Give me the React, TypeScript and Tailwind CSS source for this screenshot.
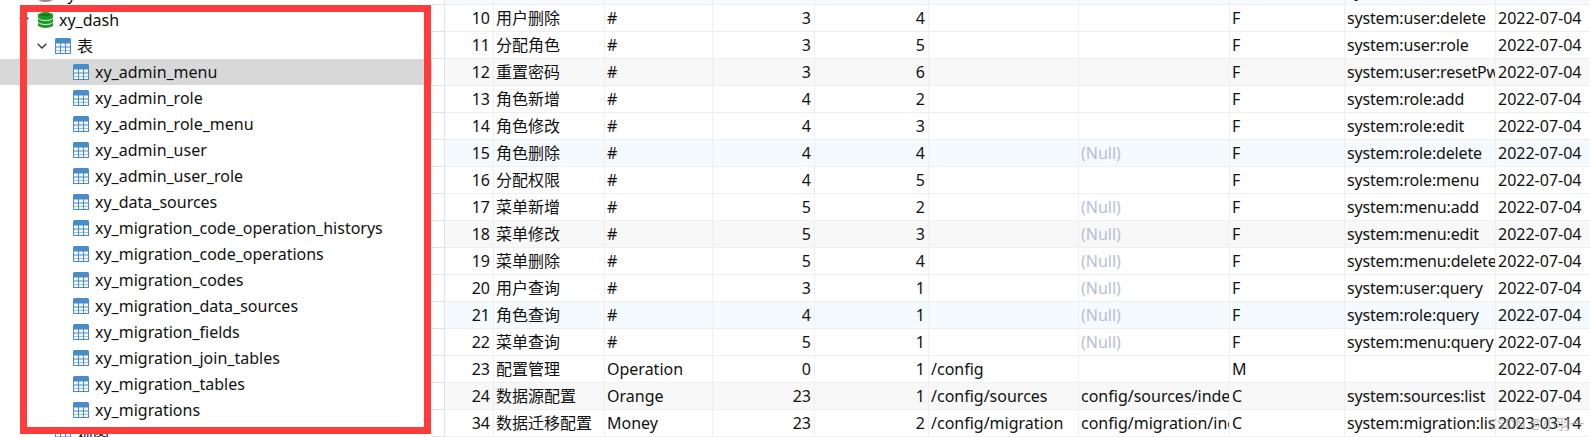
const FONT = "font-['Noto_Sans','Noto_Sans_CJK_SC',sans-serif]";

function TableIcon() {
  return (
    <svg width="16" height="16" viewBox="0 0 16 16" className="shrink-0">
      <path d="M1.5 0h13A1.5 1.5 0 0 1 16 1.5V16H0V1.5A1.5 1.5 0 0 1 1.5 0z" fill="#4a8cc8" />
      {[5.5, 9.5, 13].map((y, i) =>
        [1, 6, 11].map((x) => (
          <rect key={`${x}-${y}`} x={x} y={y} width="4" height={i === 2 ? 2 : 3} fill="#f4f8fc" />
        )),
      )}
    </svg>
  );
}

function DbIcon({ color, dark }: { color: string; dark: string }) {
  return (
    <svg width="15" height="16" viewBox="0 0 15 16" className="shrink-0">
      <rect x="0" y="2" width="15" height="12" fill={color} />
      <ellipse cx="7.5" cy="13" rx="7.5" ry="3" fill={color} />
      <ellipse cx="7.5" cy="3" rx="7.5" ry="3" fill={color} />
      <path d="M0 6.2c1.5 1.7 4 2.3 7.5 2.3S13.500 7.900 15 6.200" fill="none" stroke="#d8efd8" strokeWidth="1" />
      <path d="M0 10.200c1.500 1.700 4 2.300 7.500 2.300s6-.6 7.500-2.300" fill="none" stroke="#d8efd8" strokeWidth="1" />
      <ellipse cx="7.500" cy="3" rx="5" ry="1.300" fill={dark} />
    </svg>
  );
}

function Chevron() {
  return (
    <svg width="10" height="6" viewBox="0 0 10 6" className="shrink-0">
      <path d="M.7.700 5 5l4.300-4.300" fill="none" stroke="#333" strokeWidth="1.300" />
    </svg>
  );
}

const TABLES = [
  "xy_admin_menu",
  "xy_admin_role",
  "xy_admin_role_menu",
  "xy_admin_user",
  "xy_admin_user_role",
  "xy_data_sources",
  "xy_migration_code_operation_historys",
  "xy_migration_code_operations",
  "xy_migration_codes",
  "xy_migration_data_sources",
  "xy_migration_fields",
  "xy_migration_join_tables",
  "xy_migration_tables",
  "xy_migrations",
];

function Tree() {
  return (
    <div className="w-[432px] shrink-0 -mt-[19px] bg-white text-[16px] text-[#111111]">
      <div className="flex h-[26px] items-center pl-[38px] gap-[6px]">
        <DbIcon color="#8f8f8f" dark="#6f6f6f" />
        <span>xy</span>
      </div>
      <div className="flex h-[26px] items-center pl-[19px]">
        <Chevron />
        <span className="ml-[9px]">
          <DbIcon color="#1f9a2b" dark="#0f7a1b" />
        </span>
        <span className="ml-[6px]">xy_dash</span>
      </div>
      <div className="flex h-[26px] items-center pl-[37px]">
        <Chevron />
        <span className="ml-[8px]">
          <TableIcon />
        </span>
        <span className="ml-[6px]">表</span>
      </div>
      {TABLES.map((t, i) => (
        <div
          key={t}
          className={`flex h-[26px] items-center pl-[73px] gap-[6px] ${i === 0 ? "bg-[#d8d8d8]" : ""}`}
        >
          <TableIcon />
          <span>{t}</span>
        </div>
      ))}
      <div className="flex h-[26px] items-center pl-[55px] gap-[6px]">
        <TableIcon />
        <span>视图</span>
      </div>
    </div>
  );
}

type Row = [string, string, string, string, string, string, string, string, string, string];

const D = "2022-07-04";
const ROWS: Row[] = [
  ["9", "用户修改", "#", "3", "3", "", "", "F", "system:user:edit", D],
  ["10", "用户删除", "#", "3", "4", "", "", "F", "system:user:delete", D],
  ["11", "分配角色", "#", "3", "5", "", "", "F", "system:user:role", D],
  ["12", "重置密码", "#", "3", "6", "", "", "F", "system:user:resetPwd", D],
  ["13", "角色新增", "#", "4", "2", "", "", "F", "system:role:add", D],
  ["14", "角色修改", "#", "4", "3", "", "", "F", "system:role:edit", D],
  ["15", "角色删除", "#", "4", "4", "", "(Null)", "F", "system:role:delete", D],
  ["16", "分配权限", "#", "4", "5", "", "", "F", "system:role:menu", D],
  ["17", "菜单新增", "#", "5", "2", "", "(Null)", "F", "system:menu:add", D],
  ["18", "菜单修改", "#", "5", "3", "", "(Null)", "F", "system:menu:edit", D],
  ["19", "菜单删除", "#", "5", "4", "", "(Null)", "F", "system:menu:delete", D],
  ["20", "用户查询", "#", "3", "1", "", "(Null)", "F", "system:user:query", D],
  ["21", "角色查询", "#", "4", "1", "", "(Null)", "F", "system:role:query", D],
  ["22", "菜单查询", "#", "5", "1", "", "(Null)", "F", "system:menu:query", D],
  ["23", "配置管理", "Operation", "0", "1", "/config", "", "M", "", D],
  ["24", "数据源配置", "Orange", "23", "1", "/config/sources", "config/sources/index", "C", "system:sources:list", D],
  ["34", "数据迁移配置", "Money", "23", "2", "/config/migration", "config/migration/index", "C", "system:migration:list", "2023-03-14"],
];

const RIGHT = new Set([0, 3, 4]);

function rowBg(id: string) {
  const n = Number(id);
  if (n === 9 || n === 15 || n === 21) return "bg-[#f5faff]";
  if (n === 12 || n === 18 || n === 24) return "bg-[#f8f8f8]";
  return "bg-white";
}

function DataTable() {
  return (
    <div className="flex-1 -mt-[22px] text-[16px] text-[#111111]">
      {ROWS.map((r) => (
        <div
          key={r[0]}
          className={`grid h-[27px] grid-cols-[13px_49px_111px_108px_102px_114px_150px_151px_115px_151px_94px] ${rowBg(r[0])}`}
        >
          <div className="border-b border-r border-[#e2e2e2] bg-white" />
          {r.map((c, i) => (
            <div
              key={i}
              className={`flex items-center overflow-hidden whitespace-nowrap border-b border-[#efefef] pl-[2px] pr-[3px] ${
                i === 9 ? "" : "border-r"
              } ${i === 8 ? "tracking-[-0.16px]" : ""} ${RIGHT.has(i) ? "justify-end" : ""} ${
                c === "(Null)" ? "text-[#b6bed6]" : ""
              }`}
            >
              {c}
            </div>
          ))}
        </div>
      ))}
    </div>
  );
}

export default function App() {
  return (
    <div className={`relative flex h-[437px] w-[1590px] overflow-hidden bg-white ${FONT}`}>
      <Tree />
      <DataTable />
      <div className="absolute left-[20px] top-[5px] h-[429px] w-[411px] border-[7px] border-[#ff3b3b]" />
      <div className="absolute bottom-[3px] right-[6px] text-[14px] text-[#9a9a9a]/70">CSDN @小羽一</div>
    </div>
  );
}
